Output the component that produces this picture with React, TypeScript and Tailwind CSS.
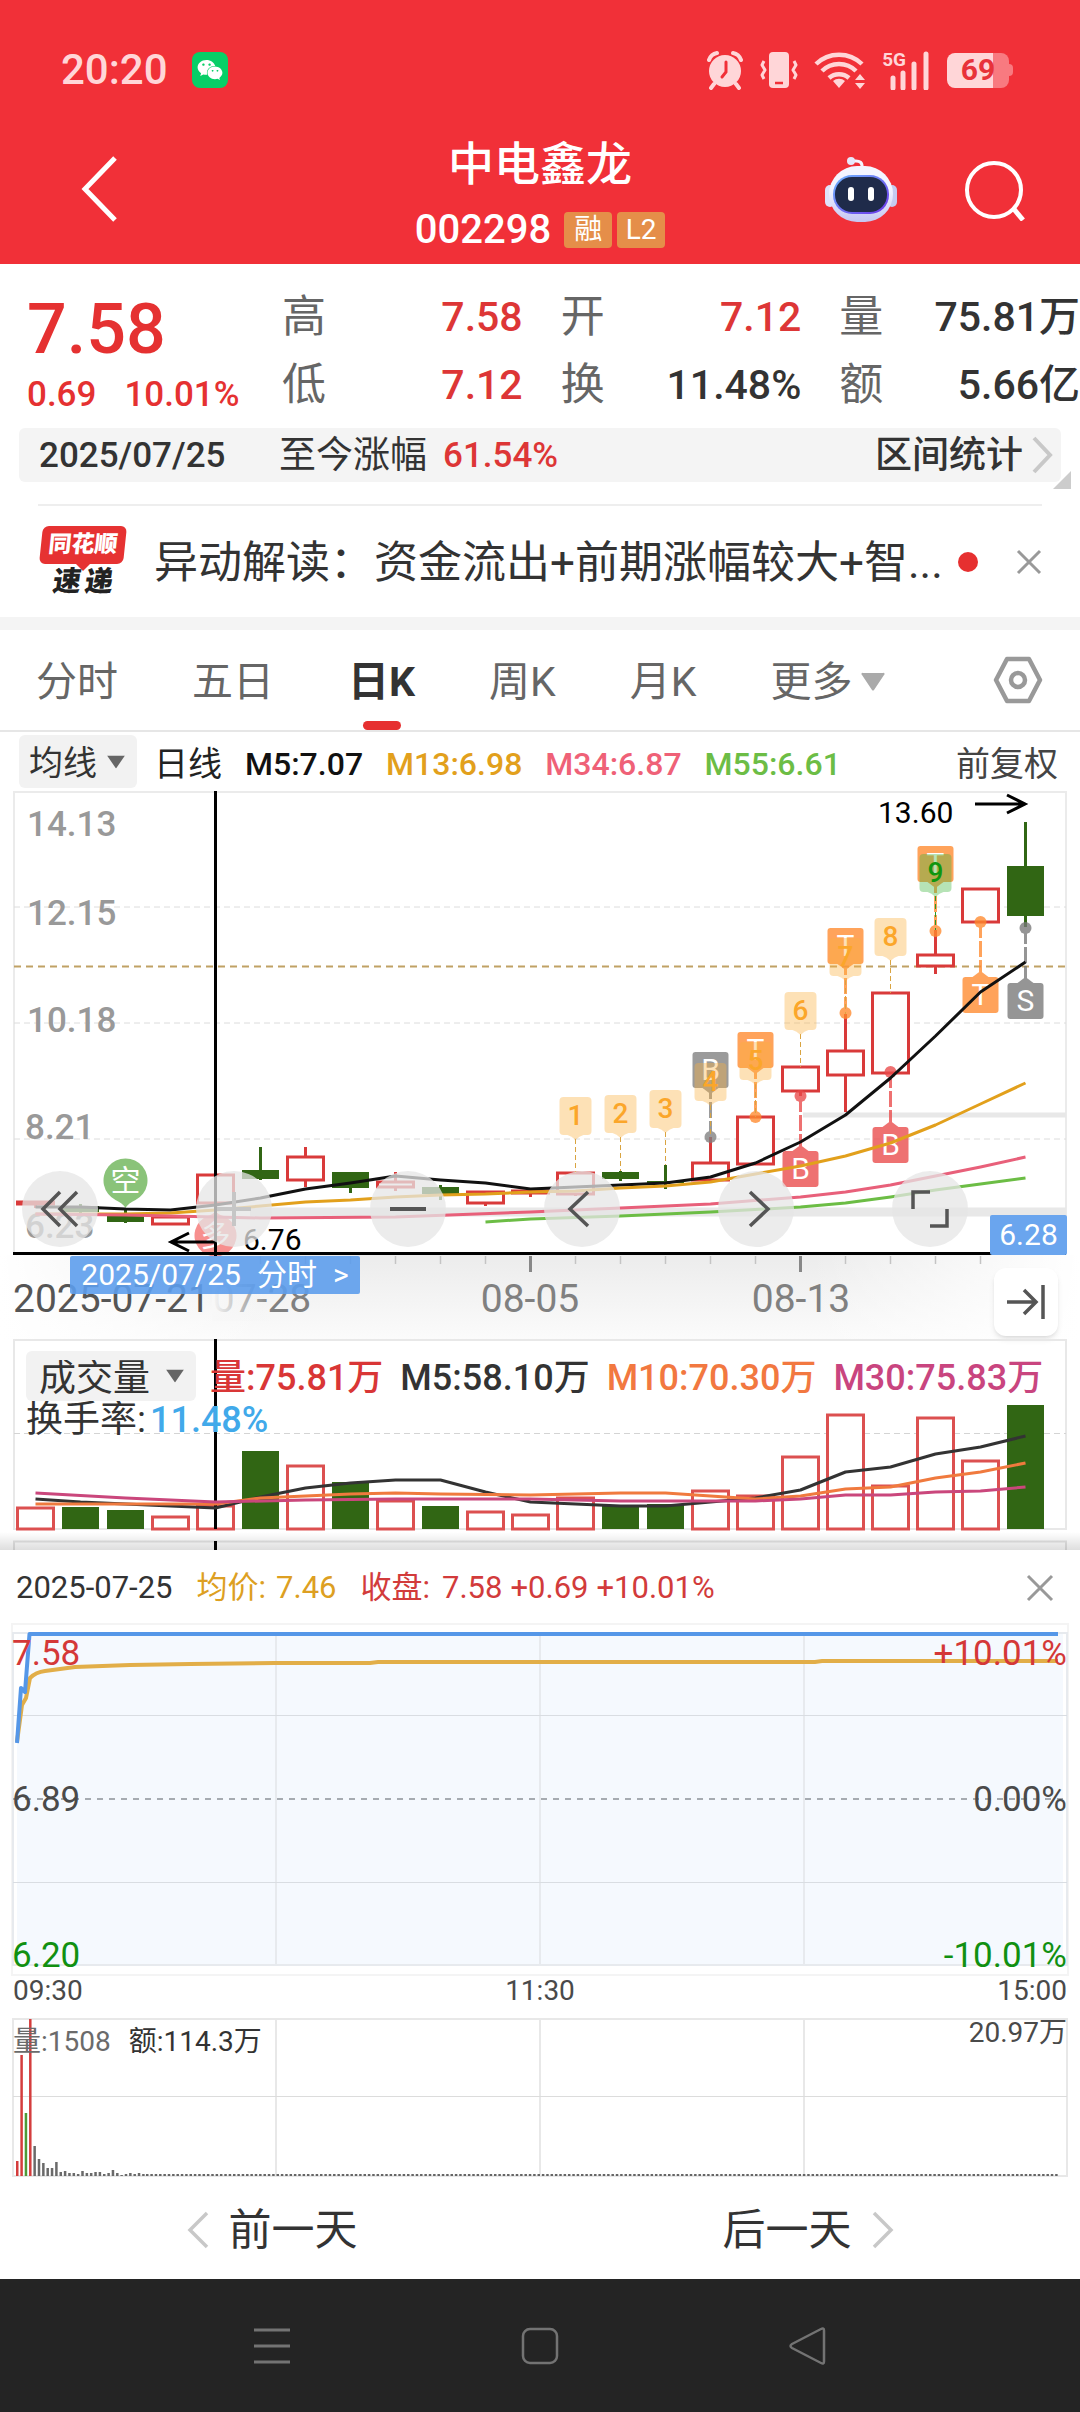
import React from "react";
import { FaWeixin } from "react-icons/fa";

const RED = "#d93a3a";
const GREEN = "#316614";

const STEP = 45;
const FIRST = 35.5;
const cx = (i: number) => FIRST + i * STEP;

type Candle = { up: boolean; high: number; top: number; bottom: number; low: number };

const candle = (up: boolean, high: number, top: number, bottom: number, low: number): Candle => ({
  up,
  high,
  top,
  bottom,
  low,
});

const candles: Candle[] = [
  candle(true, 411, 411, 413, 417),
  candle(false, 413, 415, 421, 423),
  candle(false, 419, 424, 431, 432),
  candle(true, 426, 426, 433, 433),
  candle(true, 384, 384, 412, 412),
  candle(false, 356, 379, 388, 389),
  candle(true, 356, 366, 389, 396),
  candle(false, 381, 381, 397, 402),
  candle(true, 381, 391, 396, 400),
  candle(false, 394, 396, 403, 409),
  candle(true, 401, 401, 412, 415),
  candle(true, 400, 400, 402, 406),
  candle(true, 382, 382, 403, 405),
  candle(false, 380, 381, 388, 390),
  candle(false, 374, 390, 392, 398),
  candle(true, 346, 372, 389, 389),
  candle(true, 326, 326, 373, 373),
  candle(true, 276, 276, 300, 305),
  candle(true, 223, 260, 284, 321),
  candle(true, 202, 202, 282, 282),
  candle(true, 139, 164, 175, 183),
  candle(true, 98, 98, 131, 131),
  candle(false, 31, 75, 125, 136),
];

type Series = [number, number][];

const withIndex = (values: number[], from = 0): Series => values.map((v, i) => [i + from, v]);
const toPoints = (series: Series) => series.map(([i, y]) => `${cx(i)},${y}`).join(" ");

const ma5 = withIndex([
  416, 416, 418, 419, 414, 407, 398, 392, 385, 389, 392, 398, 396, 394, 392, 386, 372, 351, 324, 287, 245, 201, 171,
]);
const ma13 = withIndex([
  423, 423, 423, 422, 419, 415, 411, 409, 406, 404, 403, 401, 400, 397, 395, 391, 383, 375, 365, 352, 334, 313, 292,
]);
const ma34: Series = [
  [0, 423], [2, 424], [4, 426], [5, 427], [8, 426], [11, 421], [13, 417], [15, 413], [17, 406], [18, 401],
  [19, 394], [20, 385], [21, 376], [22, 366],
];
const ma55: Series = [
  [10, 431], [11, 428], [13, 425], [15, 421], [17, 416], [18, 412], [19, 406], [20, 399], [21, 393], [22, 387],
];

const counts: { i: number; top: number; n: number; green?: boolean }[] = [
  { i: 12, top: 306, n: 1 },
  { i: 13, top: 304, n: 2 },
  { i: 14, top: 299, n: 3 },
  { i: 15, top: 272, n: 4 },
  { i: 16, top: 251, n: 5 },
  { i: 17, top: 201, n: 6 },
  { i: 18, top: 147, n: 7 },
  { i: 19, top: 127, n: 8 },
  { i: 20, top: 63, n: 9, green: true },
];

const signals: { i: number; dot: number; above: boolean; label: string; color: string }[] = [
  { i: 15, dot: 346, above: true, label: "B", color: "#808080" },
  { i: 16, dot: 326, above: true, label: "T", color: "#ff8a2e" },
  { i: 18, dot: 222, above: true, label: "T", color: "#ff8a2e" },
  { i: 20, dot: 140, above: true, label: "T", color: "#ff8a2e" },
  { i: 17, dot: 305, above: false, label: "B", color: "#ea4a4a" },
  { i: 19, dot: 281, above: false, label: "B", color: "#ea4a4a" },
  { i: 21, dot: 131, above: false, label: "T", color: "#ff8a2e" },
  { i: 22, dot: 137, above: false, label: "S", color: "#787878" },
];

const volumeTops = [
  168, 168, 171, 177, 166, 112, 126, 143, 161, 167, 172, 175, 158, 167, 165, 151, 156, 117, 75, 146, 78, 121, 66,
];
const vol5 = withIndex([
  160, 163, 165, 167, 169, 158, 149, 144, 141, 141, 153, 163, 165, 167, 167, 163, 159, 151, 133, 128, 115, 108, 97,
]);
const vol10: Series = [
  [0, 165], [4, 165], [5, 159], [6, 157], [7, 155], [8, 154], [9, 155], [11, 156], [13, 154], [14, 154], [15, 157],
  [16, 160], [17, 157], [18, 150], [19, 148], [20, 139], [21, 133], [22, 124],
];
const vol30: Series = [
  [0, 154], [2, 159], [4, 163], [6, 161], [8, 160], [11, 160], [13, 162], [16, 162], [17, 160], [18, 156],
  [19, 156], [20, 153], [21, 152], [22, 148],
];

const minuteVolumes = [
  15, 121, 63, 157, 30, 17, 13, 8, 8, 14, 4, 5, 3, 3, 2, 5, 3, 3, 4, 4, 2, 3, 6, 3, 1, 2, 3, 2, 3, 2,
];

function Header() {
  return (
    <header className="bg-[#f13038] text-white">
      <div className="flex h-[140px] items-center justify-between pl-[61px] pr-[67px] text-[#ffd6d8]">
        <div className="flex items-center gap-6">
          <span className="text-[42px] leading-none font-medium">20:20</span>
          <span className="flex size-9 items-center justify-center rounded-lg bg-[#07cf67] text-white">
            <FaWeixin size={26} />
          </span>
        </div>
        <div className="flex items-center gap-4">
          <svg width="38" height="40" viewBox="0 0 38 40" aria-label="闹钟">
            <circle cx="19" cy="21" r="16" fill="currentColor" />
            <path d="M3 10 Q5 4 11 3M35 10 Q33 4 27 3M8 34l-3 4M30 34l3 4" stroke="currentColor" strokeWidth="4" strokeLinecap="round" fill="none" />
            <path d="M20 12v10l-4 5" stroke="#f13038" strokeWidth="3" fill="none" strokeLinecap="round" />
          </svg>
          <svg width="38" height="38" viewBox="0 0 38 38" aria-label="振动">
            <rect x="9" y="1" width="20" height="36" rx="4" fill="currentColor" />
            <path d="M15 32h8" stroke="#f13038" strokeWidth="2.5" />
            <path d="M4 10l-2 4 3 5-3 5 2 4M34 10l2 4-3 5 3 5-2 4" stroke="currentColor" strokeWidth="3" fill="none" strokeLinejoin="round" />
          </svg>
          <svg width="52" height="38" viewBox="0 0 52 38" aria-label="无线网络">
            <g fill="none" stroke="currentColor" strokeWidth="4.5">
              <path d="M2 13a33 33 0 0 1 46 0" />
              <path d="M8 20a24 24 0 0 1 34 0" />
              <path d="M15 27a15 15 0 0 1 20 0" />
            </g>
            <path d="M25 37l-6-7a9 9 0 0 1 12 0z" fill="currentColor" />
            <path d="M46 23l5 6h-10zM46 38l5-6h-10z" fill="currentColor" />
          </svg>
          <span className="flex items-start">
            <span className="h-10 text-[19px] leading-5 font-bold">5G</span>
            <svg width="41" height="40" viewBox="0 0 41 40" className="-ml-4" aria-label="信号">
              <path d="M3 28v10M13 23v15M24 14v24M36 4v34" stroke="currentColor" strokeWidth="5" strokeLinecap="round" />
            </svg>
          </span>
          <span className="flex items-center">
            <span className="flex h-[35px] w-[62px] items-center justify-center rounded-lg bg-linear-to-r from-[#ffd6d8] from-74% to-[#f87a80] to-74% text-[30px] leading-none font-bold text-[#e8323a]">
              69
            </span>
            <span className="h-3 w-1 rounded-r-sm bg-[#f87a80]" />
          </span>
        </div>
      </div>
      <div className="grid h-[124px] grid-cols-[1fr_auto_1fr] items-start">
        <button className="ml-[74px] flex h-[98px] w-14 items-center" aria-label="返回">
          <svg width="50" height="66" viewBox="0 0 50 66" fill="none" stroke="white" strokeWidth="5">
            <path d="M41 2L11 33l30 31" />
          </svg>
        </button>
        <div className="flex flex-col items-center gap-6">
          <h1 className="text-[46px] leading-12 font-medium">中电鑫龙</h1>
          <div className="flex items-center gap-[5px]">
            <span className="mr-2 text-[40px] leading-9 font-medium">002298</span>
            <span className="flex h-9 w-12 items-center justify-center rounded-sm bg-[#e58e49] text-[28px] leading-none">融</span>
            <span className="flex h-9 w-12 items-center justify-center rounded-sm bg-[#e58e49] text-[28px] leading-none">L2</span>
          </div>
        </div>
        <div className="flex h-[100px] items-center justify-end gap-[67px] pr-[54px]">
          <button aria-label="智能助手">
            <svg width="72" height="68" viewBox="0 0 72 68">
              <defs>
                <linearGradient id="head" x1="0" y1="0" x2="0" y2="1">
                  <stop offset="0.4" stopColor="#f4f5ff" />
                  <stop offset="1" stopColor="#c5c6f2" />
                </linearGradient>
                <linearGradient id="rim" x1="0" y1="0" x2="1" y2="1">
                  <stop offset="0" stopColor="#6fb6ff" />
                  <stop offset="1" stopColor="#6b32e8" />
                </linearGradient>
              </defs>
              <path d="M37 12Q38 4 29 5" stroke="#f4f5ff" strokeWidth="3" fill="none" />
              <circle cx="26" cy="5" r="4" fill="#e6e8fb" />
              <rect x="0" y="29" width="10" height="22" rx="5" fill="#dfe2fa" />
              <rect x="62" y="29" width="10" height="22" rx="5" fill="#c5cbf0" />
              <rect x="4" y="10" width="64" height="56" rx="28" fill="url(#head)" />
              <rect x="8" y="19" width="56" height="39" rx="19" fill="url(#rim)" />
              <rect x="10" y="21" width="52" height="35" rx="17" fill="#1f2b4a" />
              <rect x="23" y="31" width="6" height="14" rx="3" fill="white" />
              <rect x="43" y="31" width="6" height="14" rx="3" fill="white" />
            </svg>
          </button>
          <button aria-label="搜索">
            <svg width="62" height="62" viewBox="0 0 62 62" fill="none" stroke="white" strokeWidth="4">
              <circle cx="30" cy="31" r="27" />
              <path d="M49 49l10 12" strokeWidth="5" />
            </svg>
          </button>
        </div>
      </div>
    </header>
  );
}

const stats = [
  { label: "高", value: "7.58", up: true },
  { label: "开", value: "7.12", up: true },
  { label: "量", value: "75.81万" },
  { label: "低", value: "7.12", up: true },
  { label: "换", value: "11.48%" },
  { label: "额", value: "5.66亿" },
];

function Quote() {
  return (
    <section className="flex h-[164px] pt-[19px]">
      <div className="w-[282px] shrink-0 pl-[27px] font-medium text-[#e53131]">
        <p className="h-[92px] text-[70px] leading-[92px]">7.58</p>
        <p className="flex gap-7 text-[35px] leading-10">
          <span>0.69</span>
          <span>10.01%</span>
        </p>
      </div>
      <dl className="grid flex-1 grid-cols-3 content-start gap-x-[38px]">
        {stats.map((s) => (
          <div key={s.label} className="flex h-[68px] items-center justify-between whitespace-nowrap">
            <dt className="text-[44px] leading-none text-[#666]">{s.label}</dt>
            <dd className={s.up ? "text-[41px] leading-none font-medium text-[#dd3636]" : "text-[41px] leading-none font-medium text-[#333]"}>
              {s.value}
            </dd>
          </div>
        ))}
      </dl>
    </section>
  );
}

function RangeBar() {
  return (
    <section className="relative mr-[19px] ml-[19px] flex h-[54px] items-center rounded-md bg-[#f4f4f4] pr-2 pl-5 text-[37px] leading-none text-[#333]">
      <span className="w-[240px] text-[35px] font-medium">2025/07/25</span>
      <span>至今涨幅</span>
      <span className="ml-4 text-[35px] font-medium text-[#dd3636]">61.54%</span>
      <button className="ml-auto flex items-center gap-[9px] font-medium">
        区间统计
        <svg width="21" height="38" viewBox="0 0 21 38" fill="none" stroke="#c8c8c8" strokeWidth="4">
          <path d="M2 2l16 17L2 36" />
        </svg>
      </button>
      <span className="absolute -right-2.5 -bottom-[7px] border-b-18 border-l-18 border-b-[#cccccc] border-l-transparent" />
    </section>
  );
}

function NewsBar() {
  return (
    <section className="mx-[38px] mt-[22px] flex h-[113px] items-center border-t-2 border-[#eeeeee]">
      <div className="ml-[3px] w-[84px] shrink-0" aria-label="同花顺速递">
        <div className="flex h-[38px] -skew-x-6 items-center justify-center rounded-md bg-[#e63232] text-[23px] font-black text-white">
          同花顺
        </div>
        <div className="mx-auto h-0 w-0 border-x-7 border-t-7 border-x-transparent border-t-[#e63232]" />
        <div className="-mt-1 flex h-[30px] -skew-x-8 items-center justify-center gap-1 text-[28px] font-black text-[#222]">
          <span>速</span>
          <span>递</span>
        </div>
      </div>
      <a href="#news" className="ml-[29px] min-w-0 flex-1 pt-0.5 text-[44px] leading-[60px] whitespace-nowrap text-[#333]">
        异动解读：资金流出+前期涨幅较大+智...
      </a>
      <span className="ml-3 size-5 shrink-0 rounded-full bg-[#e63030]" />
      <button className="ml-[38px] shrink-0" aria-label="关闭">
        <svg width="26" height="26" viewBox="0 0 26 26" stroke="#999" strokeWidth="3">
          <path d="M2 2l22 22M24 2L2 24" />
        </svg>
      </button>
    </section>
  );
}

function Tabs() {
  const tab = "flex h-full items-center pt-1 text-[#666]";
  return (
    <nav className="flex h-[102px] items-center border-b-2 border-[#e6e6e6] pr-[37px] pl-9 text-[41px] leading-none">
      <div className="flex h-full gap-[74px]">
        <button className={tab}>分时</button>
        <button className={tab}>五日</button>
        <button className="relative flex h-full items-center pt-1 font-bold text-[#333]" aria-current="page">
          日K
          <span className="absolute bottom-0 left-1/2 h-[9px] w-[38px] -translate-x-1/2 rounded-full bg-[#e63030]" />
        </button>
        <button className={tab}>周K</button>
        <button className={tab}>月K</button>
        <button className={tab} aria-haspopup="menu">
          更多
          <svg width="24" height="20" viewBox="0 0 24 20" className="ml-2" fill="#aaa">
            <path d="M2 1h20a1 1 0 0 1 1 2L13 18q-1 1-2 0L1 3a1 1 0 0 1 1-2z" />
          </svg>
        </button>
      </div>
      <button className="ml-auto" aria-label="设置">
        <svg width="50" height="48" viewBox="0 0 50 48" fill="none" stroke="#999" strokeWidth="4.5" strokeLinejoin="round">
          <path d="M14 3h22l11 21-11 21H14L3 24z" />
          <circle cx="25" cy="24" r="7" />
        </svg>
      </button>
    </nav>
  );
}

function Caret() {
  return (
    <svg width="18" height="13" viewBox="0 0 18 13" fill="#666" className="pointer-events-none absolute top-1/2 right-3 -translate-y-1/2">
      <path d="M0 0h18L9 13z" />
    </svg>
  );
}

function AverageBar() {
  return (
    <section className="flex h-[59px] items-center pr-[22px] pl-[19px] text-[32px] leading-none font-medium">
      <label className="relative mr-[17px]">
        <select aria-label="均线" className="h-[53px] w-[118px] appearance-none rounded-md bg-[#f2f2f2] pt-0.5 pl-[10px] text-[34px] font-normal text-[#333]">
          <option>均线</option>
        </select>
        <Caret />
      </label>
      <div className="flex items-center gap-[23px] pt-1">
        <span className="text-[34px] font-normal text-[#222]">日线</span>
        <span className="text-[#111]">M5:7.07</span>
        <span className="text-[#e2a01c]">M13:6.98</span>
        <span className="text-[#ef6177]">M34:6.87</span>
        <span className="text-[#6cbd45]">M55:6.61</span>
      </div>
      <button className="ml-auto pt-1 text-[34px] font-normal text-[#444]">前复权</button>
    </section>
  );
}

function CandleShape({ i, c }: { i: number; c: Candle }) {
  const x = cx(i);
  if (!c.up) {
    return (
      <g fill={GREEN}>
        <rect x={x - 18.5} y={c.top} width="37" height={c.bottom - c.top} />
        <rect x={x - 1.5} y={c.high} width="3" height={c.low - c.high} />
      </g>
    );
  }
  return (
    <g stroke={RED} strokeWidth="3" fill="white">
      {c.high < c.top && <path d={`M${x} ${c.high}V${c.top}`} />}
      {c.low > c.bottom && <path d={`M${x} ${c.bottom}V${c.low}`} />}
      <rect x={x - 18} y={c.top} width="36" height={c.bottom - c.top} />
    </g>
  );
}

function SignalShape({ i, dot, above, label, color }: (typeof signals)[number]) {
  const x = cx(i);
  const top = above ? dot - 85 : dot + 55;
  return (
    <g opacity="0.78" fill={color}>
      <path d={above ? `M${x} ${dot}V${dot - 48}` : `M${x} ${dot}V${dot + 52}`} stroke={color} strokeWidth="3" strokeDasharray="16 3" />
      <circle cx={x} cy={dot} r="6" />
      <path d={above ? `M${x - 8} ${top + 36}l8 6 8-6z` : `M${x - 8} ${top}l8-6 8 6z`} />
      <rect x={x - 18} y={top} width="36" height="36" rx="3" />
      <text x={x} y={top + 28} fill="white" fontSize="30" textAnchor="middle">
        {label}
      </text>
    </g>
  );
}

function CountShape({ i, top, n, green }: (typeof counts)[number]) {
  const x = cx(i);
  return (
    <g>
      <path d={`M${x} ${top + 42}V${candles[i].high}`} stroke={green ? "#2a9a2a" : "#d9a441"} strokeDasharray="5 3" />
      <path
        d={`M${x - 12} ${top}h24q4 0 4 4v30q0 4-4 4h-4q-4 1-8 5q-4-4-8-5h-4q-4 0-4-4v-30q0-4 4-4z`}
        fill={green ? "#3fb53f" : "#fbb040"}
        opacity="0.38"
      />
      <text x={x} y={top + 28} fontSize="28" fontWeight="500" textAnchor="middle" fill={green ? "#0f960f" : "#fba62a"}>
        {n}
      </text>
    </g>
  );
}

const control = "flex size-[76px] items-center justify-center rounded-full bg-[#e6e6e6]/75";

function CandleChart() {
  return (
    <section className="relative">
      <svg viewBox="0 0 1080 548" className="block h-auto w-full">
        <defs>
          <linearGradient id="axisV" x1="0" y1="0" x2="0" y2="1">
            <stop offset="0" stopColor="#ececec" />
            <stop offset="1" stopColor="#fbfbfb" />
          </linearGradient>
          <linearGradient id="axisH" x1="0" x2="1">
            <stop offset="0" stopColor="white" />
            <stop offset="0.25" stopColor="white" stopOpacity="0" />
            <stop offset="0.75" stopColor="white" stopOpacity="0" />
            <stop offset="1" stopColor="white" />
          </linearGradient>
          <linearGradient id="labelFade" x1="0" x2="1">
            <stop offset="0" stopColor="#f8f8f8" />
            <stop offset="1" stopColor="#f4f4f4" stopOpacity="0" />
          </linearGradient>
        </defs>

        <rect y="464" width="1080" height="84" fill="url(#axisV)" />
        <rect y="464" width="1080" height="84" fill="url(#axisH)" />

        <rect x="14" y="1" width="1052" height="461" fill="none" stroke="#ebebeb" strokeWidth="2" />
        {[116, 232, 348].map((y) => (
          <path key={y} d={`M14 ${y}H1066`} stroke="#dcdcdc" strokeDasharray="6 4" />
        ))}
        <path d="M14 175.5H1066" stroke="#c0a164" strokeWidth="2" strokeDasharray="7 5" />
        <path d="M803 324H1066" stroke="#e8e8e8" strokeWidth="5" />
        <path d="M250 421H1066" stroke="#e8e8e8" strokeWidth="9" />

        <g fontSize="35" fontWeight="500" fill="#999">
          <text x="27" y="45">14.13</text>
          <text x="27" y="134">12.15</text>
          <text x="27" y="241">10.18</text>
          <text x="25" y="348">8.21</text>
          <text x="25" y="447">6.23</text>
        </g>

        {candles.map((c, i) => (
          <CandleShape key={i} i={i} c={c} />
        ))}

        {signals.map((s) => (
          <SignalShape key={s.i} {...s} />
        ))}
        {counts.map((c) => (
          <CountShape key={c.i} {...c} />
        ))}

        <g opacity="0.8">
          <path d="M125.5 417q-3-5-10-8a22 22 0 1 1 20 0q-7 3-10 8z" fill="#6db558" />
          <text x="125.5" y="400" fontSize="30" textAnchor="middle" fill="white">空</text>
        </g>
        <g opacity="0.7">
          <path d="M215.5 420q3 4 8 5a21 21 0 1 1-16 0q5-1 8-5z" fill="#f4605f" />
          <text x="215.5" y="455" fontSize="30" textAnchor="middle" fill="white">多</text>
        </g>

        <g fill="none" strokeWidth="3" strokeLinejoin="round">
          <polyline points={toPoints(ma55)} stroke="#6cbd45" />
          <polyline points={toPoints(ma5)} stroke="#111" />
          <polyline points={toPoints(ma13)} stroke="#e2a01c" />
          <polyline points={toPoints(ma34)} stroke="#e8607a" />
        </g>

        <g stroke="black" strokeWidth="3" fill="none">
          <path d="M975 13h50M1007 4l18 9-18 9" />
          <path d="M216 451h-44M189 442l-18 9 18 9" />
        </g>
        <text x="878" y="32" fontSize="30">13.60</text>
        <text x="243" y="459" fontSize="30">6.76</text>

        {candles.map((_, i) =>
          i < 5 || i > 21 ? null : (
            <path
              key={i}
              d={`M${cx(i)} 465V${i % 6 === 5 && i > 5 ? 481 : 473}`}
              stroke={i % 6 === 5 && i > 5 ? "#888" : "#c4c4c4"}
              strokeWidth={i % 6 === 5 && i > 5 ? 3 : 1.5}
            />
          )
        )}
        <g fontSize="39" fill="#808080" textAnchor="middle">
          <text x="262" y="521">07-28</text>
          <text x="530" y="521">08-05</text>
          <text x="801" y="521">08-13</text>
        </g>
        <rect x="212" y="486" width="60" height="44" fill="url(#labelFade)" />
        <text x="13" y="521" fontSize="39" fill="#555">2025-07-21</text>

        <path d="M13 462.5H1066M215.5 0V465" stroke="black" strokeWidth="3" />
      </svg>

      <div className="absolute right-[112px] bottom-[92px] left-[22px] flex justify-between">
        <button className={control} aria-label="快退">
          <svg width="40" height="40" viewBox="0 0 40 40" fill="none" stroke="#555" strokeWidth="3.5">
            <path d="M20 3L3 20l17 17M37 3L20 20l17 17" />
          </svg>
        </button>
        <button className={control} aria-label="放大" disabled>
          <svg width="36" height="36" viewBox="0 0 36 36" stroke="#c6c6c6" strokeWidth="4">
            <path d="M18 1v34M1 18h34" />
          </svg>
        </button>
        <button className={control} aria-label="缩小">
          <svg width="36" height="36" viewBox="0 0 36 36" stroke="#555" strokeWidth="4">
            <path d="M0 18h36" />
          </svg>
        </button>
        <button className={control} aria-label="左移">
          <svg width="40" height="40" viewBox="0 0 40 40" fill="none" stroke="#555" strokeWidth="3.5">
            <path d="M26 3L8 20l18 17" />
          </svg>
        </button>
        <button className={control} aria-label="右移">
          <svg width="40" height="40" viewBox="0 0 40 40" fill="none" stroke="#555" strokeWidth="3.5">
            <path d="M14 3l18 17-18 17" />
          </svg>
        </button>
        <button className={control} aria-label="全屏">
          <svg width="40" height="40" viewBox="0 0 40 40" fill="none" stroke="#555" strokeWidth="3.5">
            <path d="M3 20V3h17M37 20v17H20" />
          </svg>
        </button>
      </div>

      <button className="absolute bottom-[45px] left-[70px] flex h-[38px] w-[290px] items-center justify-center gap-4 rounded-xs bg-[#5d9dec]/90 text-[30px] leading-none text-white">
        <span>2025/07/25</span>
        <span>分时</span>
        <span>&gt;</span>
      </button>
      <span className="absolute right-[13px] bottom-[84px] flex h-10 w-[77px] items-center justify-center rounded-xs bg-[#6aa5ee] text-[30px] leading-none text-white">
        6.28
      </span>
      <button className="absolute right-[22px] bottom-[3px] flex h-[68px] w-16 items-center justify-center rounded-xl bg-white shadow-md" aria-label="跳到最新">
        <svg width="38" height="36" viewBox="0 0 38 36" fill="none" stroke="#555" strokeWidth="3.5">
          <path d="M0 18h28M17 6l12 12-12 12M36 1v34" />
        </svg>
      </button>
    </section>
  );
}

function VolumeChart() {
  return (
    <section className="relative">
      <svg viewBox="0 0 1080 211" className="block h-auto w-full">
        <defs>
          <linearGradient id="sheetShadow" x1="0" y1="0" x2="0" y2="1">
            <stop offset="0" stopColor="#000" stopOpacity="0" />
            <stop offset="1" stopColor="#000" stopOpacity="0.13" />
          </linearGradient>
        </defs>
        <rect x="14" y="1" width="1052" height="189" fill="none" stroke="#e8e8e8" strokeWidth="2" />
        <path d="M14 94.5H1066" stroke="#d4d4d4" strokeDasharray="6 4" />
        <path d="M14 211V202.5H1066V211" stroke="#e4e4e4" strokeWidth="2" fill="none" />
        {volumeTops.map((top, i) =>
          candles[i].up ? (
            <rect key={i} x={cx(i) - 18} y={top + 1} width="36" height={189 - top} fill="white" stroke="#dc5050" strokeWidth="3" />
          ) : (
            <rect key={i} x={cx(i) - 18.5} y={top} width="37" height={190 - top} fill={GREEN} />
          )
        )}
        <path d="M215.5 0V190M215.5 202V211" stroke="black" strokeWidth="3" />
        <g fill="none" strokeWidth="3" strokeLinejoin="round">
          <polyline points={toPoints(vol5)} stroke="#333" />
          <polyline points={toPoints(vol10)} stroke="#f07a3e" />
          <polyline points={toPoints(vol30)} stroke="#ca477c" />
        </g>
        <rect y="193" width="1080" height="18" fill="url(#sheetShadow)" />
      </svg>
      <div className="absolute inset-x-0 top-3 pl-[26px] text-4xl leading-none font-medium whitespace-nowrap">
        <div className="flex items-center">
          <label className="relative mr-[14px]">
            <select aria-label="成交量" className="h-[50px] w-[170px] appearance-none rounded-md bg-[#f2f2f2] pt-1 pl-[13px] text-[37px] font-normal text-[#333]">
              <option>成交量</option>
            </select>
            <Caret />
          </label>
          <div className="flex gap-[17px] pt-1">
            <span className="text-[#d93636]">量:75.81万</span>
            <span className="text-[#333]">M5:58.10万</span>
            <span className="text-[#f27840]">M10:70.30万</span>
            <span className="text-[#c9457f]">M30:75.83万</span>
          </div>
        </div>
        <p className="flex items-center gap-1 text-[#333]">
          <span className="text-[37px] font-normal">换手率:</span>
          <span className="text-[#41a9ea]">11.48%</span>
        </p>
      </div>
    </section>
  );
}

function IntradaySheet() {
  const average =
    "M17 119L22 82 26 75 30 55Q36 49 45 48L60 46 75 44 130 42 190 41 275 40H370L378 39H815L822 38H1058";
  return (
    <section className="bg-white">
      <div className="flex h-[73px] items-center gap-6 pt-0.5 pr-[26px] pl-[16px] text-[31px] leading-none">
        <span className="text-[#333]">2025-07-25</span>
        <span className="flex gap-[10px] text-[#dd9f22]">
          <span>均价:</span>
          <span>7.46</span>
        </span>
        <span className="flex gap-2 text-[#d23b3b]">
          <span className="mr-1">收盘:</span>
          <span>7.58</span>
          <span>+0.69</span>
          <span>+10.01%</span>
        </span>
        <button className="ml-auto" aria-label="关闭">
          <svg width="28" height="28" viewBox="0 0 28 28" stroke="#999" strokeWidth="3">
            <path d="M2 2l24 24M26 2L2 26" />
          </svg>
        </button>
      </div>

      <svg viewBox="0 0 1080 353" className="block h-auto w-full">
        <rect x="12" y="1" width="1056" height="351" fill="none" stroke="#f4f4f4" strokeWidth="2" />
        <path d="M17 119L21 65 25 69 29.5 11H1063V342H17z" fill="#f5f9fe" />
        <g stroke="#e7eaee" strokeWidth="2" fill="none">
          <rect x="13" y="10" width="1054" height="332" />
          <path d="M276 10V342M540 10V342M804 10V342" />
        </g>
        <path d="M13 92.5H1067M13 259.5H1067" stroke="#d9dde2" />
        <path d="M13 176H1064" stroke="#a6abb1" strokeWidth="2" strokeDasharray="6 6" />
        <path d={average} fill="none" stroke="#e2ae48" strokeWidth="4" />
        <path d="M17 120L21 65 25 69 29.5 11H1058" fill="none" stroke="#5597e8" strokeWidth="4" strokeLinejoin="round" />
        <g fontSize="35">
          <text x="12" y="42" fill="#d43838">7.58</text>
          <text x="12" y="188" fill="#4a4a4a">6.89</text>
          <text x="12" y="344" fill="#119011">6.20</text>
          <g textAnchor="end">
            <text x="1067" y="42" fill="#d43838">+10.01%</text>
            <text x="1067" y="188" fill="#4a4a4a">0.00%</text>
            <text x="1067" y="344" fill="#119011">-10.01%</text>
          </g>
        </g>
      </svg>

      <div className="flex h-[42px] items-center justify-between px-[13px] pb-3 text-[28px] leading-none text-[#4a4a4a]">
        <span>09:30</span>
        <span>11:30</span>
        <span>15:00</span>
      </div>

      <div className="relative">
        <svg viewBox="0 0 1080 159" className="block h-auto w-full">
          <g stroke="#e8e8e8" strokeWidth="2" fill="none">
            <rect x="13" y="1" width="1054" height="157" />
            <path d="M276 1V157M540 1V157M804 1V157" />
          </g>
          <path d="M13 78.5H1067" stroke="#dcdcdc" />
          {minuteVolumes.map((h, i) => (
            <rect
              key={i}
              x={16 + i * 4.35}
              y={158 - h}
              width="2.5"
              height={h}
              fill={i === 2 ? "#4d9a37" : i < 4 ? "#d43d3d" : "#6a6a6a"}
            />
          ))}
          <path d="M146 157H1058" stroke="#666" strokeWidth="2" strokeDasharray="2.5 1.85" />
        </svg>
        <div className="absolute inset-x-0 top-px flex items-start justify-between px-[13px] text-[28px] leading-7">
          <p className="flex gap-[18px] pt-[9px] text-[#333]">
            <span className="text-[#6b6b6b]">量:1508</span>
            <span>额:114.3万</span>
          </p>
          <span className="text-[#4a4a4a]">20.97万</span>
        </div>
      </div>

      <div className="grid h-[102px] grid-cols-2 px-1 pt-1 text-[43px] leading-none text-[#333]">
        <button className="flex items-center justify-center gap-5">
          <svg width="22" height="38" viewBox="0 0 22 38" fill="none" stroke="#c8c8c8" strokeWidth="3.5">
            <path d="M20 2L3 19l17 17" />
          </svg>
          前一天
        </button>
        <button className="flex items-center justify-center gap-5">
          后一天
          <svg width="22" height="38" viewBox="0 0 22 38" fill="none" stroke="#c8c8c8" strokeWidth="3.5">
            <path d="M2 2l17 17L2 36" />
          </svg>
        </button>
      </div>
    </section>
  );
}

function SystemBar() {
  return (
    <nav className="flex h-[133px] items-center justify-between bg-[#242424] px-[252px]" aria-label="系统导航">
      <button aria-label="最近任务">
        <svg width="40" height="40" viewBox="0 0 40 40" stroke="#737373" strokeWidth="3">
          <path d="M2 4h36M2 20h36M2 36h36" />
        </svg>
      </button>
      <button aria-label="主屏幕">
        <svg width="40" height="40" viewBox="0 0 40 40" fill="none" stroke="#737373" strokeWidth="2.5">
          <rect x="3" y="3" width="34" height="34" rx="7" />
        </svg>
      </button>
      <button aria-label="返回上一页">
        <svg width="40" height="40" viewBox="0 0 40 40" fill="none" stroke="#737373" strokeWidth="2.5" strokeLinejoin="round">
          <path d="M36 4.500v31q0 3-3 1.500L4 22q-3-2 0-4L33 3q3-1.500 3 1.500z" />
        </svg>
      </button>
    </nav>
  );
}

export default function App() {
  return (
    <main className="min-h-screen w-full overflow-hidden bg-white font-['Roboto','Noto_Sans_CJK_SC',sans-serif]">
      <Header />
      <Quote />
      <RangeBar />
      <NewsBar />
      <div className="h-[13px] bg-[#f4f4f4]" />
      <Tabs />
      <AverageBar />
      <CandleChart />
      <VolumeChart />
      <IntradaySheet />
      <SystemBar />
    </main>
  );
}
